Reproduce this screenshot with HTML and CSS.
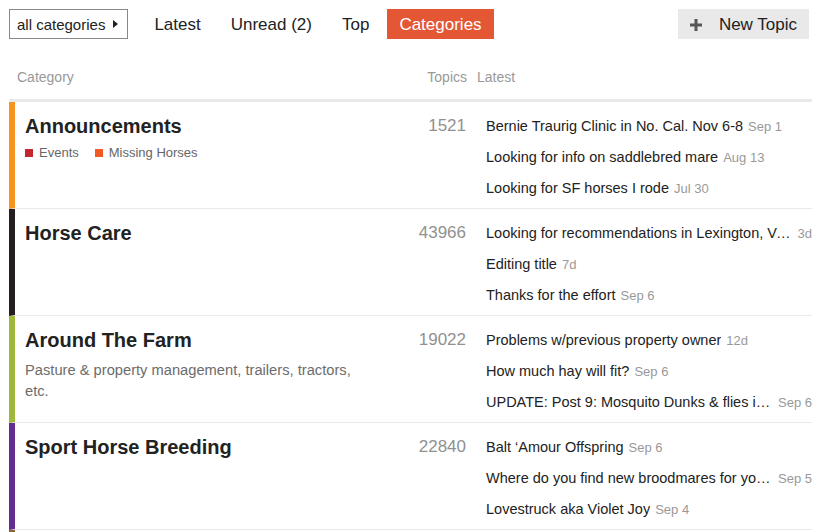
FILE: index.html
```html
<!DOCTYPE html>
<html lang="en">
<head>
    <meta charset="UTF-8">
    <meta name="viewport" content="width=device-width, initial-scale=1.0">
    <title>Categories</title>
    <link rel="stylesheet" href="styles.css">
</head>
<body>
    <div class="page">
        <div class="nav-bar">
            <div class="cat-dropdown">all categories <span class="caret"></span></div>
            <ul class="nav-pills">
                <li><a href="#">Latest</a></li>
                <li><a href="#">Unread (2)</a></li>
                <li><a href="#">Top</a></li>
                <li class="active"><a href="#">Categories</a></li>
            </ul>
            <button class="new-topic">
                <svg width="12" height="12" viewBox="0 0 12 12"><path d="M4.5 0h3v4.5H12v3H7.5V12h-3V7.5H0v-3h4.5z" fill="#555"/></svg>
                New Topic
            </button>
        </div>

        <table class="category-list">
            <colgroup>
                <col class="col-category">
                <col class="col-topics">
                <col class="col-latest">
            </colgroup>
            <thead>
                <tr>
                    <th class="th-category">Category</th>
                    <th class="th-topics">Topics</th>
                    <th class="th-latest">Latest</th>
                </tr>
            </thead>
            <tbody>
                <tr>
                    <td class="category" style="border-left-color: #f7941d;">
                        <h3>Announcements</h3>
                        <div class="subcats">
                            <span class="subcat"><i style="background: #c1272d;"></i>Events</span>
                            <span class="subcat"><i style="background: #f15a24;"></i>Missing Horses</span>
                        </div>
                    </td>
                    <td class="topics">1521</td>
                    <td class="latest">
                        <div class="topic"><a href="#">Bernie Traurig Clinic in No. Cal. Nov 6-8</a><span class="age">Sep 1</span></div>
                        <div class="topic"><a href="#">Looking for info on saddlebred mare</a><span class="age">Aug 13</span></div>
                        <div class="topic"><a href="#">Looking for SF horses I rode</a><span class="age">Jul 30</span></div>
                    </td>
                </tr>
                <tr>
                    <td class="category" style="border-left-color: #231f20;">
                        <h3>Horse Care</h3>
                    </td>
                    <td class="topics">43966</td>
                    <td class="latest">
                        <div class="topic"><a href="#">Looking for recommendations in Lexington, VA area</a><span class="age">3d</span></div>
                        <div class="topic"><a href="#">Editing title</a><span class="age">7d</span></div>
                        <div class="topic"><a href="#">Thanks for the effort</a><span class="age">Sep 6</span></div>
                    </td>
                </tr>
                <tr>
                    <td class="category" style="border-left-color: #9eb83b;">
                        <h3>Around The Farm</h3>
                        <p class="desc">Pasture &amp; property management, trailers, tractors, etc.</p>
                    </td>
                    <td class="topics">19022</td>
                    <td class="latest">
                        <div class="topic"><a href="#">Problems w/previous property owner</a><span class="age">12d</span></div>
                        <div class="topic"><a href="#">How much hay will fit?</a><span class="age">Sep 6</span></div>
                        <div class="topic"><a href="#">UPDATE: Post 9: Mosquito Dunks &amp; flies in the trough</a><span class="age">Sep 6</span></div>
                    </td>
                </tr>
                <tr>
                    <td class="category" style="border-left-color: #652d90;">
                        <h3>Sport Horse Breeding</h3>
                    </td>
                    <td class="topics">22840</td>
                    <td class="latest">
                        <div class="topic"><a href="#">Balt ‘Amour Offspring</a><span class="age">Sep 6</span></div>
                        <div class="topic"><a href="#">Where do you find new broodmares for your program?</a><span class="age">Sep 5</span></div>
                        <div class="topic"><a href="#">Lovestruck aka Violet Joy</a><span class="age">Sep 4</span></div>
                    </td>
                </tr>
                <tr>
                    <td class="category" style="border-left-color: #8c6238;"></td>
                    <td class="topics"></td>
                    <td class="latest"></td>
                </tr>
            </tbody>
        </table>
    </div>
</body>
</html>
```

FILE: styles.css
```css
body {
    margin: 0;
    font-family: "Liberation Sans", Arial, sans-serif;
    color: #222;
    background: #fff;
}

a {
    color: #222;
    text-decoration: none;
}

.page {
    padding: 9px 7px 0 9px;
}

/* Top navigation */
.nav-bar {
    display: flex;
    align-items: center;
}

.cat-dropdown {
    display: flex;
    align-items: center;
    height: 28px;
    padding: 0 9px 0 7px;
    border: 1px solid #888;
    font-size: 15px;
}

.caret {
    width: 0;
    height: 0;
    margin-left: 8px;
    border-top: 4px solid transparent;
    border-bottom: 4px solid transparent;
    border-left: 5px solid #222;
}

.nav-pills {
    display: flex;
    gap: 6px;
    list-style: none;
    margin: 0 0 0 14px;
    padding: 0;
}

.nav-pills a {
    display: block;
    padding: 1px 12px 0;
    line-height: 29px;
    font-size: 17px;
}

.nav-pills .active a {
    background: #e45735;
    color: #fff;
}

.new-topic {
    display: flex;
    align-items: center;
    gap: 17px;
    margin-left: auto;
    height: 30px;
    padding: 1px 12px 0;
    border: none;
    background: #e9e9e9;
    font-family: inherit;
    font-size: 17px;
    color: #222;
}

/* Category table */
.category-list {
    width: 803px;
    margin-top: 28px;
    border-spacing: 0;
    table-layout: fixed;
}

.col-category { width: 395px; }
.col-topics { width: 68px; }
.col-latest { width: 340px; }

.category-list th {
    padding: 0 0 12px;
    border-bottom: 3px solid #e9e9e9;
    font-size: 14px;
    font-weight: normal;
    line-height: 20px;
    color: #999;
    text-align: left;
}

.category-list .th-category { padding-left: 8px; }
.category-list .th-topics { padding-right: 5px; text-align: right; }
.category-list .th-latest { padding-left: 5px; }

.category-list td {
    vertical-align: top;
    border-bottom: 1px solid #e9e9e9;
}

.category {
    padding: 12px 10px 0;
    border-left: 6px solid transparent;
}

.category h3 {
    margin: 0;
    font-size: 20px;
    line-height: 24px;
    font-weight: bold;
    color: #222;
}

.subcats {
    display: flex;
    gap: 16px;
    margin-top: 5px;
    font-size: 13px;
    line-height: 20px;
    color: #666;
}

.subcat {
    display: flex;
    align-items: center;
}

.subcat i {
    width: 8px;
    height: 8px;
    margin-right: 6px;
}

.desc {
    max-width: 335px;
    margin: 8px 0 0;
    font-size: 14.7px;
    line-height: 21px;
    color: #6c6c6c;
}

.topics {
    padding: 12px 6px 0 0;
    font-size: 17px;
    line-height: 24px;
    text-align: right;
    color: #919191;
}

.latest {
    height: 106px;
    box-sizing: border-box;
    padding: 9px 0 4px 14px;
}

.topic {
    display: flex;
    align-items: baseline;
    height: 21px;
    padding: 5px 0;
    line-height: 21px;
}

.topic a {
    min-width: 0;
    overflow: hidden;
    white-space: nowrap;
    text-overflow: ellipsis;
    font-size: 14.5px;
}

.age {
    flex-shrink: 0;
    margin-left: 5px;
    font-size: 13px;
    line-height: 21px;
    color: #999;
}
```
